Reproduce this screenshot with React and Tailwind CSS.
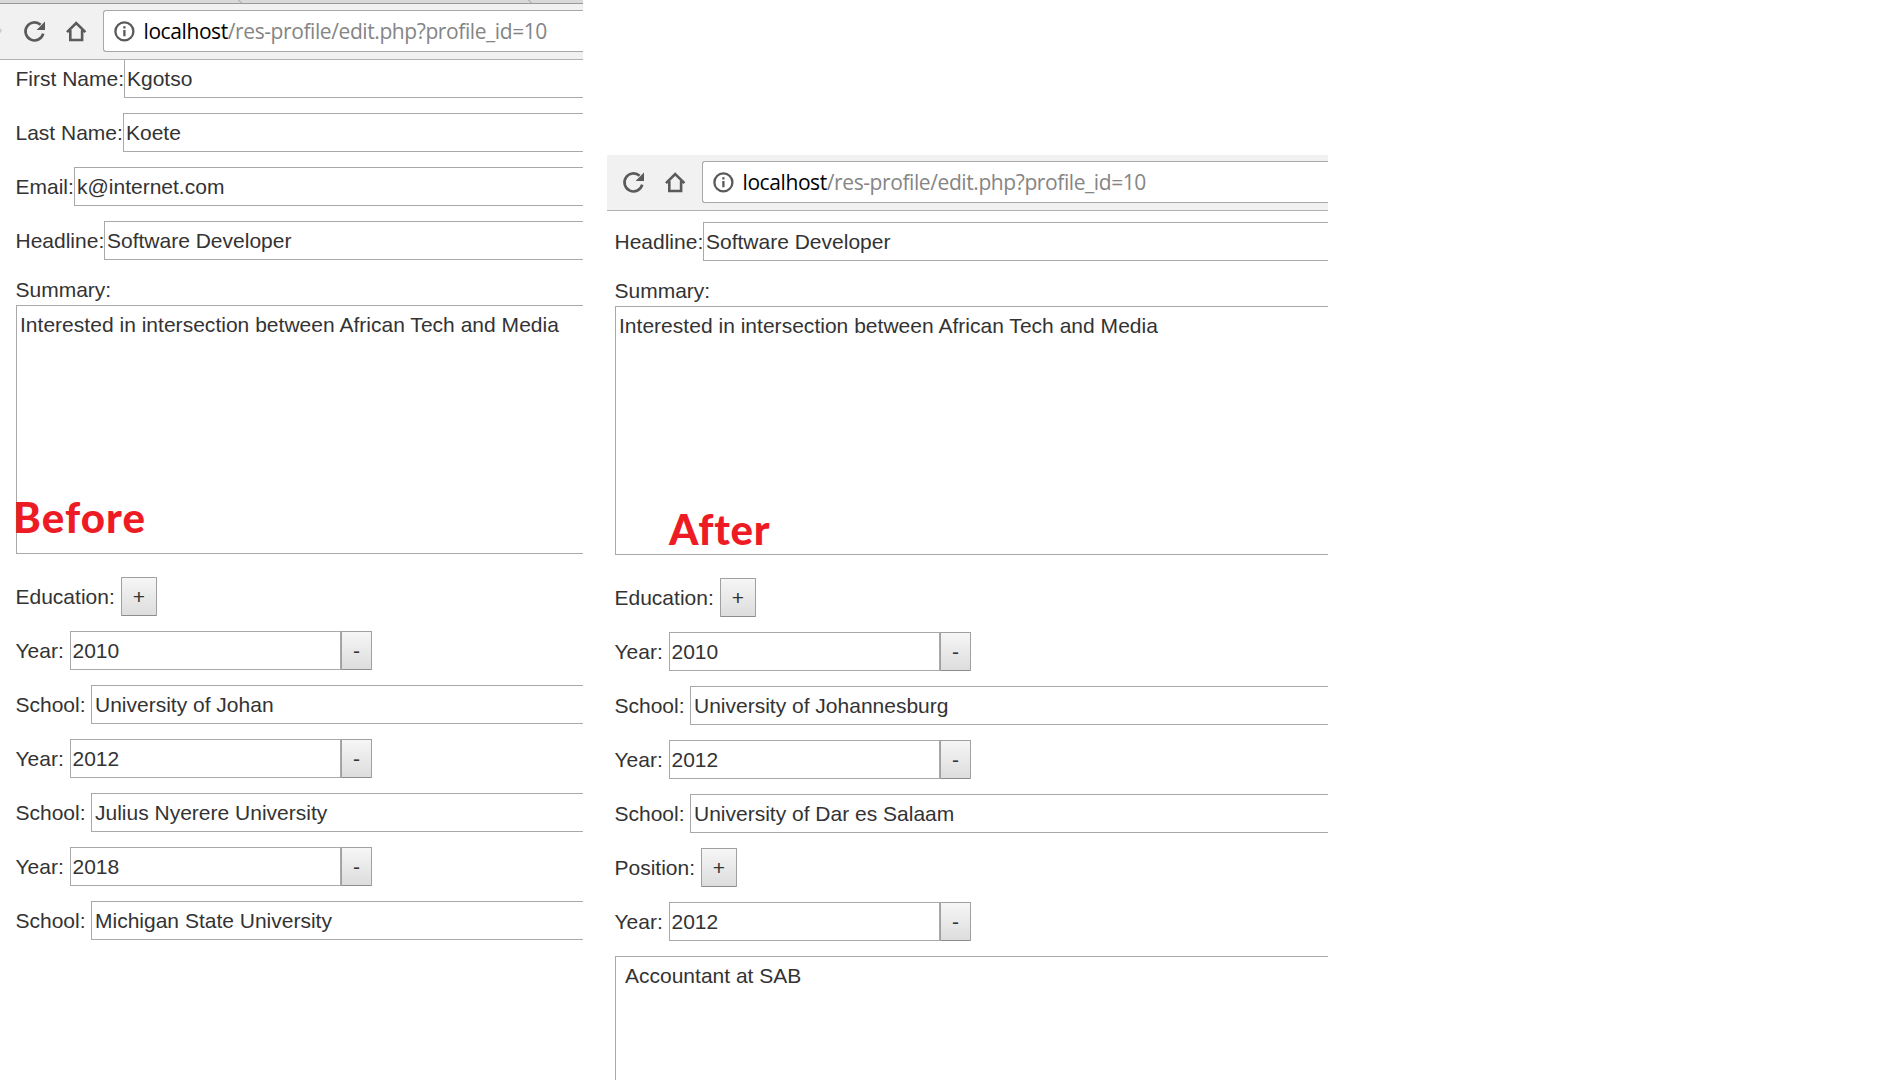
const ARIAL = 'font-["Liberation_Sans",Arial,sans-serif]';

function Toolbar({ forward }) {
  return (
    <div className="flex h-[56px] shrink-0 items-start border-b border-[#b2b2b2] bg-[#f1f1f1] pt-[6px]">
      <svg className="-mt-[6px] h-[55px] w-[103px] shrink-0" viewBox="0 4 103 55" fill="none" stroke="#5a5a5a" strokeWidth="2.6">
        {forward && <path d="M0 28l2.2 2.7L0 33.4z" fill="#cfcfcf" stroke="none" />}
        <path d="M43.2 33.6A9 9 0 1 1 40.6 24.8" />
        <path d="M45 21.6V30h-8.4z" fill="#5a5a5a" stroke="none" />
        <path d="M67 32.2L76.2 23l9.2 9.2M70.3 30v10h11.8V30" />
      </svg>
      <div className="flex h-[42px] flex-1 items-center rounded-l-[3px] border border-r-0 border-[#a8a8a8] bg-white pl-[10px]">
        <svg className="h-[21px] w-[21px] shrink-0" viewBox="0 0 21 21" fill="none" stroke="#5a5a5a" strokeWidth="2.3">
          <circle cx="10.4" cy="10.4" r="9" />
          <path d="M10.4 9v6.3M10.4 5.3v2.3" />
        </svg>
        <span className='ml-[8.5px] whitespace-nowrap font-["Open_Sans","Noto_Sans",sans-serif] text-[21px] leading-[28px] tracking-[-0.41px] text-[#858585]'>
          <span className="text-black">localhost</span>/res-profile/edit.php?profile_id=10
        </span>
      </div>
    </div>
  );
}

function Label({ width = "", children }) {
  return <span className={`shrink-0 -indent-[0.5px] whitespace-nowrap ${width}`}>{children}</span>;
}

function Field({ label, labelWidth, value, pad = "pl-[2px]" }) {
  return (
    <div className="mb-[15px] flex h-[39px] items-center">
      <Label width={labelWidth}>{label}</Label>
      <div className={`flex h-full flex-1 items-center whitespace-nowrap border border-r-0 border-[#a9a9a9] bg-white ${pad}`}>{value}</div>
    </div>
  );
}

function Btn({ children, width }) {
  return (
    <button className={`h-[39px] rounded-[1px] border border-[#a0a0a0] border-b-[#8c8c8c] bg-linear-to-b from-[#f6f6f6] to-[#dddddd] text-center ${width}`}>
      {children}
    </button>
  );
}

function YearRow({ year }) {
  return (
    <div className="mb-[15px] flex h-[39px] items-center">
      <Label width="w-[54px]">Year:</Label>
      <div className="flex h-full w-[271px] items-center border border-[#a9a9a9] bg-white pl-[1.5px]">{year}</div>
      <Btn width="w-[31px]">-</Btn>
    </div>
  );
}

function AddRow({ label, labelWidth }) {
  return (
    <div className="mb-[15px] flex h-[39px] items-center">
      <Label width={labelWidth}>{label}</Label>
      <Btn width="w-[36px]">+</Btn>
    </div>
  );
}

function Summary({ children }) {
  return (
    <div className="mb-[23px]">
      <div className="h-[30px] -indent-[0.5px] leading-[30px]">Summary:</div>
      <div className="relative h-[249px] border border-r-0 border-[#a9a9a9] pl-[3px] pt-[7px] leading-[24px]">
        <span className="whitespace-nowrap tracking-[0.02px]">Interested in intersection between African Tech and Media</span>
        {children}
      </div>
    </div>
  );
}

const TAG = 'absolute whitespace-nowrap font-["Lato",sans-serif] font-black text-[42px] leading-[50px] text-[#ed1c24] [font-variant-ligatures:none]';

function School({ value }) {
  return <Field label="School:" labelWidth="w-[75px]" value={value} pad="pl-[3px]" />;
}

export default function App() {
  return (
    <div className={`flex h-[1080px] w-[1889px] items-start overflow-hidden bg-white text-[21px] leading-[24px] text-[#333333] ${ARIAL}`}>
      <section className="flex w-[583px] flex-col overflow-hidden">
        <div className="h-[4px] border-b border-[#999999] bg-[#d9d9d9]">
          <svg className="block h-[3px] w-[583px]" viewBox="0 0 583 3" stroke="#a0a0a0" fill="none">
            <path d="M238.5 0l3 3M528.5 0l3 3" />
          </svg>
        </div>
        <Toolbar forward />
        <div className="-mt-px flex h-[39px] items-center pl-[16px]">
          <Label width="w-[108px]">First Name:</Label>
          <div className="flex h-full flex-1 items-center border border-r-0 border-[#a9a9a9] border-t-[#b2b2b2] pl-[2px]">Kgotso</div>
        </div>
        <div className="flex flex-col pl-[16px] pt-[15px]">
          <Field label="Last Name:" labelWidth="w-[107px]" value="Koete" />
          <Field label="Email:" labelWidth="w-[58px]" value="k@internet.com" />
          <Field label="Headline:" labelWidth="w-[88px]" value="Software Developer" />
          <Summary>
            <span className={`${TAG} -left-[4px] top-[186px] tracking-[1.1px]`}>Before</span>
          </Summary>
          <AddRow label="Education:" labelWidth="w-[105px]" />
          <YearRow year="2010" />
          <School value="University of Johan" />
          <YearRow year="2012" />
          <School value="Julius Nyerere University" />
          <YearRow year="2018" />
          <School value="Michigan State University" />
        </div>
      </section>

      <section className="ml-[24px] mt-[155px] flex h-[925px] w-[721px] flex-col overflow-hidden">
        <div className="flex h-[56px] shrink-0 flex-col overflow-hidden">
          <div className="-ml-[8px]">
            <Toolbar />
          </div>
        </div>
        <div className="flex flex-col pl-[8px] pt-[11px]">
          <Field label="Headline:" labelWidth="w-[88px]" value="Software Developer" />
          <Summary>
            <span className={`${TAG} left-[53px] top-[197px] tracking-[0.7px]`}>After</span>
          </Summary>
          <AddRow label="Education:" labelWidth="w-[105px]" />
          <YearRow year="2010" />
          <School value="University of Johannesburg" />
          <YearRow year="2012" />
          <School value="University of Dar es Salaam" />
          <AddRow label="Position:" labelWidth="w-[86px]" />
          <YearRow year="2012" />
          <div className="h-[249px] border border-r-0 border-[#a9a9a9] pl-[9px] pt-[7px]">Accountant at SAB</div>
        </div>
      </section>
    </div>
  );
}
